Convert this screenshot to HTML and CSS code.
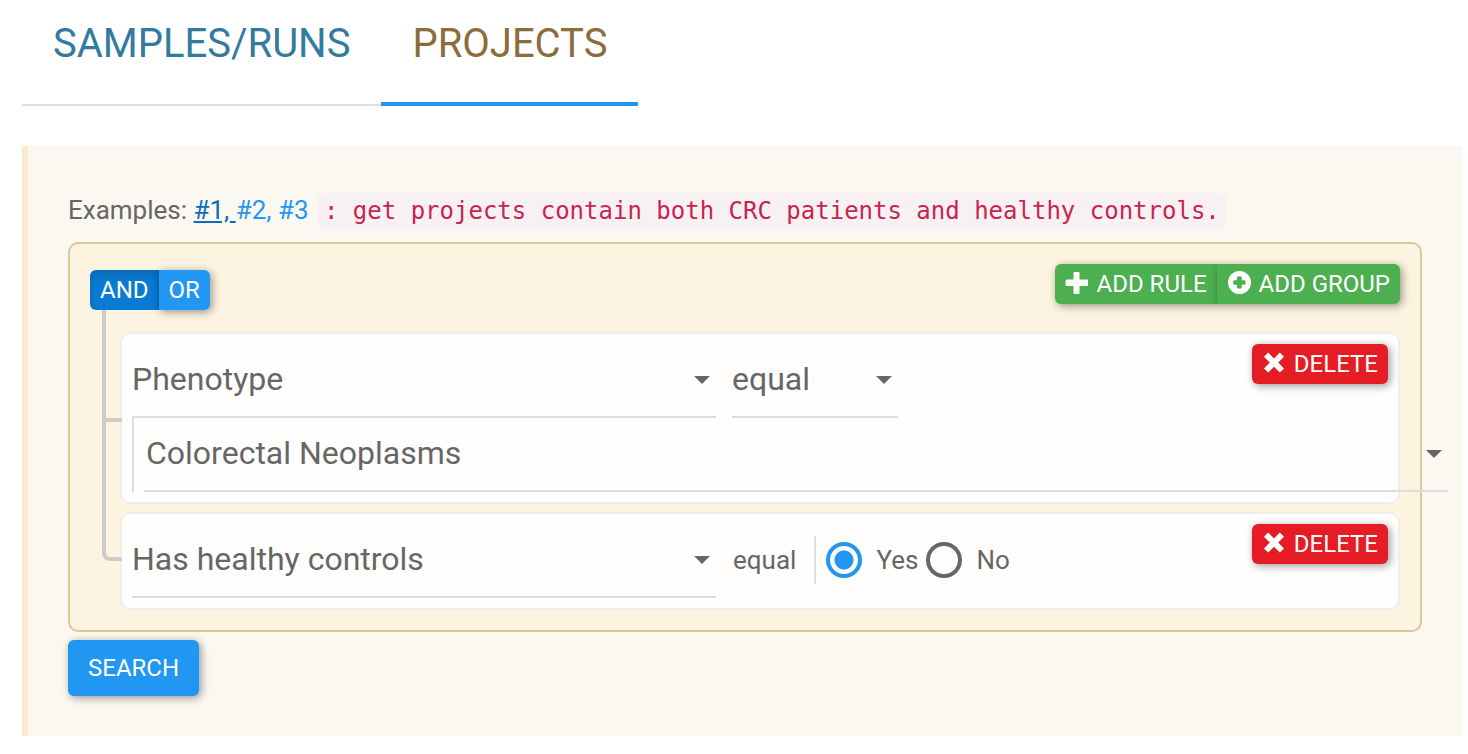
FILE: index.html
```html
<!DOCTYPE html>
<html lang="en">
<head>
<meta charset="utf-8">
<meta name="viewport" content="width=device-width, initial-scale=1">
<title>Project search</title>
<link rel="stylesheet" href="styles.css">
</head>
<body>
<nav class="tabs">
  <a class="tab" href="#samples">SAMPLES/RUNS</a>
  <a class="tab tab-active" href="#projects" aria-current="page">PROJECTS</a>
</nav>
<main class="panel">
  <p class="examples">Examples: <a class="link link-hover" href="#ex1">#1, </a><a class="link" href="#ex2">#2, </a><a class="link" href="#ex3">#3</a> <code class="hint">: get projects contain both CRC patients and healthy controls.</code></p>

  <section class="group">
    <div class="group-header">
      <div class="conditions">
        <label class="btn btn-blue condition"><input class="hidden-radio" type="radio" name="condition" checked>AND</label>
        <label class="btn btn-blue condition"><input class="hidden-radio" type="radio" name="condition">OR</label>
      </div>
      <div class="actions">
        <button class="btn btn-green" type="button"><svg class="icon" viewBox="0 0 24 24" aria-hidden="true"><path d="M9.500 1h4a1 1 0 0 1 1 1v6.500h7.500a1 1 0 0 1 1 1v4.500a1 1 0 0 1-1 1h-7.500v7a1 1 0 0 1-1 1h-4a1 1 0 0 1-1-1v-7h-7a1 1 0 0 1-1-1v-4.500a1 1 0 0 1 1-1h7v-6.500a1 1 0 0 1 1-1z"/></svg>ADD RULE</button>
        <button class="btn btn-green" type="button"><svg class="icon" viewBox="0 0 24 24" aria-hidden="true"><path fill-rule="evenodd" d="M12.500 0a11.500 11.500 0 1 1 0 23a11.500 11.500 0 1 1 0-23zM10.800 5.500a.8.8 0 0 0-.8.8v2.900h-2.900a.8.8 0 0 0-.8.8v3a.8.8 0 0 0 .8.8h2.900v2.900a.8.8 0 0 0 .8.800h3.200a.8.8 0 0 0 .8-.8v-2.900h2.900a.8.8 0 0 0 .8-.8v-3a.8.8 0 0 0-.8-.8h-2.900v-2.900a.8.8 0 0 0-.8-.8z"/></svg>ADD GROUP</button>
      </div>
    </div>

    <ul class="rules">
      <li class="rule">
        <div class="rule-row">
          <div class="select-box select-filter"><select class="select" aria-label="Field"><option>Phenotype</option></select></div>
          <div class="select-box select-operator"><select class="select" aria-label="Operator"><option>equal</option></select></div>
          <button class="btn btn-red" type="button"><svg class="icon" viewBox="0 0 24 24" aria-hidden="true"><path d="M6.200 1.600L12 7.400L17.800 1.600L22 5.800L16.200 11.600L22 17.400L17.800 21.600L12 15.800L6.200 21.600L2 17.400L7.800 11.600L2 5.800z"/></svg>DELETE</button>
        </div>
        <div class="rule-value">
          <div class="select-box"><select class="select select-inset" aria-label="Value"><option>Colorectal Neoplasms</option></select></div>
        </div>
      </li>
      <li class="rule">
        <div class="rule-row">
          <div class="select-box select-filter"><select class="select" aria-label="Field"><option>Has healthy controls</option></select></div>
          <div class="rule-controls">
            <div class="operator">equal</div>
            <div class="radios">
              <label class="choice"><input class="radio" type="radio" name="controls" checked>Yes</label>
              <label class="choice"><input class="radio" type="radio" name="controls">No</label>
            </div>
          </div>
          <button class="btn btn-red" type="button"><svg class="icon" viewBox="0 0 24 24" aria-hidden="true"><path d="M6.200 1.600L12 7.400L17.800 1.600L22 5.800L16.200 11.600L22 17.400L17.800 21.600L12 15.800L6.200 21.600L2 17.400L7.800 11.600L2 5.800z"/></svg>DELETE</button>
        </div>
      </li>
    </ul>
  </section>

  <button class="btn btn-blue search" type="button">SEARCH</button>
</main>
</body>
</html>
```
FILE: styles.css
```css
*, *::before, *::after { box-sizing: border-box; }

body {
  margin: 0;
  padding: 0 6px 18px 22px;
  background: #fff;
  color: #666;
  font-family: Roboto, "Liberation Sans", sans-serif;
  font-size: 26px;
  line-height: 48px;
}

.tabs { display: flex; margin-bottom: 40px; }

.tab {
  padding: 8px 31px 24px;
  border-bottom: 2px solid #ddd;
  color: #337a9f;
  font-size: 40px;
  line-height: 72px;
  text-decoration: none;
}

.tab-active {
  padding-bottom: 22px;
  border-bottom: 4px solid #2196f3;
  color: #8a6d3b;
}

.panel {
  padding: 40px;
  border-left: 6px solid #faebcc;
  background: #fbf8f1;
}

.examples { margin: 0 0 8px; }
.link { color: #2196f3; text-decoration: none; }
.link-hover { color: #0a6ebd; text-decoration: underline; }

.hint {
  margin-left: 3px;
  padding: 4px 6px;
  border-radius: 6px;
  background: #f8f1f4;
  color: #c7254e;
  font-family: "DejaVu Sans Mono", monospace;
  font-size: 24px;
  line-height: 24px;
}

.group {
  margin-bottom: 8px;
  padding: 20px;
  border: 2px solid #dcc896;
  border-radius: 10px;
  background: #fcf4e0;
}

.group-header {
  display: flex;
  justify-content: space-between;
  align-items: flex-start;
  margin-bottom: 22px;
}

.conditions, .actions { display: flex; }
.conditions { padding-top: 6px; }

.btn {
  display: flex;
  align-items: center;
  justify-content: center;
  gap: 8px;
  height: 40px;
  padding: 0 10px;
  border: 0;
  border-radius: 6px;
  color: #fff;
  font-family: inherit;
  font-size: 24px;
  line-height: 36px;
  box-shadow: 2px 2px 8px rgba(0, 0, 0, 0.4);
  cursor: pointer;
}

.btn-blue { background: #2196f3; }
.btn-green { background: #4caf50; }
.btn-red { align-self: flex-start; margin-left: auto; background: #e51c23; }

.condition:first-child, .actions .btn:first-child {
  border-top-right-radius: 0;
  border-bottom-right-radius: 0;
}

.condition:last-child, .actions .btn:last-child {
  border-top-left-radius: 0;
  border-bottom-left-radius: 0;
}

.condition:has(:checked) {
  background: #0a7bd5;
  box-shadow: inset 0 6px 10px rgba(0, 0, 0, 0.15);
}

.hidden-radio { position: absolute; opacity: 0; pointer-events: none; }
.icon { width: 24px; height: 24px; margin-bottom: 2px; fill: currentColor; }

.rules {
  display: flex;
  flex-direction: column;
  gap: 8px;
  margin: 0;
  padding: 0 0 0 30px;
  list-style: none;
}

.rule {
  position: relative;
  padding: 10px;
  border: 2px solid #eee;
  border-radius: 10px;
  background: #fffefd;
}

/* connector lines of the rule tree */
.rule::before, .rule::after {
  content: "";
  position: absolute;
  left: -20px;
  width: 20px;
  border-left: 4px solid #ccc;
}

.rule::before {
  top: -24px;
  bottom: calc(50% - 4px);
  border-bottom: 4px solid #ccc;
}

.rule::after { top: 50%; bottom: -12px; }

.rule:last-child::before {
  top: -12px;
  bottom: 50%;
  border-bottom-left-radius: 8px;
}

.rule:last-child::after { display: none; }

.rule-row { display: flex; align-items: center; gap: 16px; }

.rule-value {
  margin-right: -60px;
  padding-left: 10px;
  border-left: 2px solid #ddd;
}

.select-box { position: relative; }
.select-filter { width: 584px; }
.select-operator { width: 166px; }

.select-box::after {
  content: "";
  position: absolute;
  top: 32px;
  right: 6px;
  border: 8px solid transparent;
  border-top-color: #666;
  border-bottom-width: 0;
  pointer-events: none;
}

.select {
  display: block;
  width: 100%;
  height: 74px;
  padding: 0 32px 2px 0;
  border: 0;
  border-bottom: 2px solid #ddd;
  border-radius: 0;
  background: transparent;
  color: #666;
  font-family: inherit;
  font-size: 32px;
  appearance: none;
}

.select-inset { padding-left: 2px; }

.rule-controls {
  display: flex;
  gap: 18px;
  padding: 0 0 2px 1px;
}

.radios {
  display: flex;
  gap: 8px;
  padding-left: 10px;
  border-left: 2px solid #ddd;
}

.choice { display: flex; align-items: center; gap: 14px; }

.radio {
  width: 36px;
  height: 36px;
  margin: 0;
  border: 4px solid #666;
  border-radius: 50%;
  appearance: none;
}

.radio:checked {
  border-color: #2196f3;
  background: radial-gradient(circle, #2196f3 9px, transparent 10px);
}

.search { height: 56px; padding: 0 20px; }
```
